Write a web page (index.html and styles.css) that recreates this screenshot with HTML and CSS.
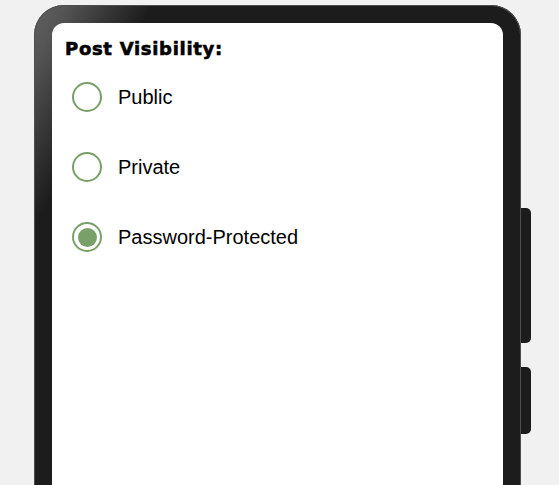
FILE: index.html
```html
<!DOCTYPE html>
<html lang="en">
<head>
<meta charset="utf-8">
<title>Post Visibility</title>
<link rel="stylesheet" href="styles.css">
</head>
<body>
  <div class="stage">
    <div class="phone">
      <span class="side-btn side-btn-long"></span>
      <span class="side-btn side-btn-short"></span>
      <div class="screen">
        <h2 class="title">Post Visibility:</h2>
        <div class="options" role="radiogroup">
          <label class="option">
            <span class="radio"></span>
            <span class="label">Public</span>
          </label>
          <label class="option">
            <span class="radio"></span>
            <span class="label">Private</span>
          </label>
          <label class="option">
            <span class="radio radio-checked"><span class="dot"></span></span>
            <span class="label">Password-Protected</span>
          </label>
        </div>
      </div>
    </div>
  </div>
</body>
</html>
```

FILE: styles.css
```css
html, body {
  margin: 0;
  padding: 0;
  height: 485px;
  overflow: hidden;
  background: #f1f1f1;
}

.stage {
  padding: 5px 0 0 34px;
}

.phone {
  position: relative;
  width: 487px;
  height: 900px;
  box-sizing: border-box;
  padding: 18px;
  border-radius: 30px;
  background: linear-gradient(118deg, #606060 0px, #555555 28px, #353535 70px, #1c1c1c 105px, #1c1c1c 100%);
  box-shadow: inset 0 0 0 1px #4e4e4e;
}

.side-btn {
  position: absolute;
  right: -10px;
  width: 10px;
  background: #1c1c1c;
  border-radius: 0 5px 5px 0;
}

.side-btn-long {
  top: 203px;
  height: 135px;
}

.side-btn-short {
  top: 362px;
  height: 67px;
}

.screen {
  height: 100%;
  box-sizing: border-box;
  background: #ffffff;
  border-radius: 12px;
  padding: 15px 13px;
}

.title {
  margin: 0;
  font-family: "DejaVu Sans", "Liberation Sans", sans-serif;
  font-weight: bold;
  font-size: 18px;
  line-height: 22px;
  letter-spacing: 0.7px;
  color: #000;
  -webkit-text-stroke: 0.6px #000;
}

.options {
  margin-top: 22px;
  display: flex;
  flex-direction: column;
  gap: 40px;
}

.option {
  display: flex;
  align-items: center;
  height: 30px;
  padding-left: 7px;
}

.radio {
  width: 30px;
  height: 30px;
  box-sizing: border-box;
  border: 2.8px solid #78a067;
  border-radius: 50%;
  display: flex;
  align-items: center;
  justify-content: center;
  flex: none;
}

.dot {
  width: 19px;
  height: 19px;
  border-radius: 50%;
  background: #79a068;
}

.label {
  margin-left: 16px;
  font-family: "Liberation Sans", Arial, sans-serif;
  font-size: 20px;
  line-height: 32px;
  color: #000;
}
```
